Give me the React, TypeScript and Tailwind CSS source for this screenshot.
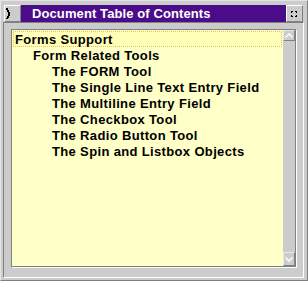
import React from "react";

const items: { text: string; indent: number }[] = [
  { text: "Forms Support", indent: 0 },
  { text: "Form Related Tools", indent: 1 },
  { text: "The FORM Tool", indent: 2 },
  { text: "The Single Line Text Entry Field", indent: 2 },
  { text: "The Multiline Entry Field", indent: 2 },
  { text: "The Checkbox Tool", indent: 2 },
  { text: "The Radio Button Tool", indent: 2 },
  { text: "The Spin and Listbox Objects", indent: 2 },
];

const indentClass = ["pl-[1px]", "pl-[19px]", "pl-[38px]"];

export default function App() {
  return (
    <div
      className="w-[308px] h-[281px] box-border bg-[#cccccc] border border-t-[#e4e4e4] border-l-[#e4e4e4] border-b-[#808080] border-r-[#808080] flex flex-col pt-[4px] pl-[2px] pr-[3px]"
      style={{ fontFamily: '"Liberation Sans", Arial, sans-serif' }}
    >
      {/* title row */}
      <div className="flex h-[17px] ml-[1px] mr-[1px]">
        <div className="w-[17px] h-[17px] box-border bg-[#cccccc] border border-t-white border-l-white border-b-[#808080] border-r-[#808080] relative">
          <svg className="absolute left-0 top-0" width="15" height="15" viewBox="0 0 15 15">
            <path
              d="M1 2h2v2h-2z M2 4h2v2h-2z M3 6h2v4h-2z M2 10h2v2h-2z M1 12h2v1h-2z"
              fill="#000"
            />
          </svg>
        </div>
        <div className="flex-1 bg-[#4a0c88] text-white font-bold text-[13px] leading-[17px] pl-[11px] whitespace-nowrap tracking-[0.1px]">
          Document Table of Contents
        </div>
        <div className="w-[17px] h-[17px] box-border bg-[#cccccc] border border-t-white border-l-white border-b-[#808080] border-r-[#808080] relative">
          <svg className="absolute left-[4px] top-[5px]" width="6" height="6" viewBox="0 0 6 6">
            <path d="M0 0h2v1h-1v1h-1z M4 0h2v2h-1v-1h-1z M0 4h1v1h1v1h-2z M5 4h1v2h-2v-1h1z" fill="#000" />
          </svg>
        </div>
      </div>
      {/* client area */}
      <div className="h-[256px] box-border border border-t-[#808080] border-l-[#808080] border-b-white border-r-white flex pt-[6px] pl-[7px] pr-[6px] pb-[9px]">
        <div className="flex-1 box-border border border-t-[#808080] border-l-[#808080] border-b-white border-r-white flex">
          <div className="flex-1 flex border-b border-r border-[#808080]">
            <div className="w-[271px] bg-[#ffffc8] pt-[1px] pl-[1px]">
              {items.map((it, i) => (
                <div
                  key={i}
                  className={
                    "h-[16px] w-[269px] box-border text-[13px] font-bold leading-[16px] text-black whitespace-nowrap tracking-[0.35px] " +
                    indentClass[it.indent] +
                    (i === 0
                      ? " border border-dotted border-[#e0c060] bg-[#ffffb8]"
                      : " border border-transparent")
                  }
                >
                  {it.text}
                </div>
              ))}
            </div>
            <div className="w-[12px] bg-[#cccccc] flex flex-col justify-between">
              <div className="h-[11px] box-border border border-t-[#e8e8e8] border-l-[#e8e8e8] border-b-[#808080] border-r-[#808080] flex items-center justify-center">
                <svg width="8" height="5" viewBox="0 0 8 5">
                  <path d="M0.5 4.5 L4 1 L7.5 4.5" stroke="#fff" strokeWidth="1.4" fill="none" />
                </svg>
              </div>
              <div className="h-[14px] box-border border border-t-[#e8e8e8] border-l-[#e8e8e8] border-b-[#808080] border-r-[#808080] flex items-center justify-center">
                <svg width="8" height="5" viewBox="0 0 8 5">
                  <path d="M0.5 0.5 L4 4 L7.5 0.5" stroke="#fff" strokeWidth="1.4" fill="none" />
                </svg>
              </div>
            </div>
          </div>
        </div>
      </div>
    </div>
  );
}
